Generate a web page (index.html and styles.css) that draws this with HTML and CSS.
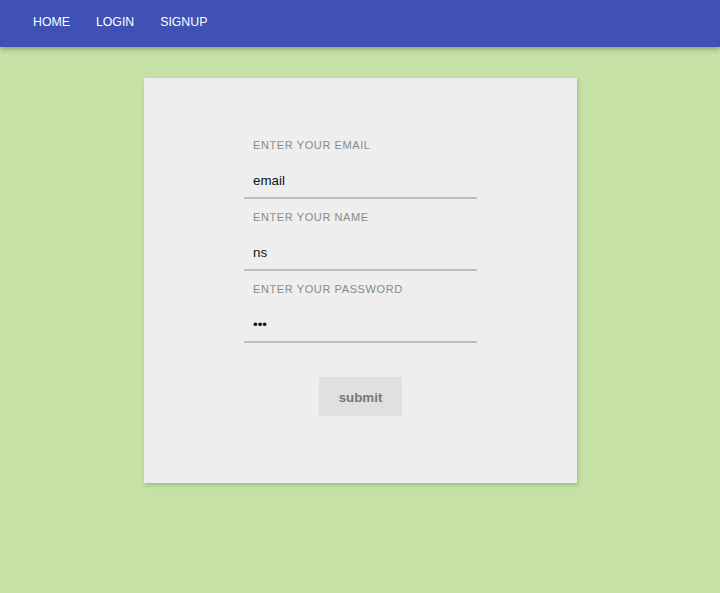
FILE: index.html
```html
<!DOCTYPE html>
<html>
<head>
<meta charset="utf-8">
<link rel="stylesheet" href="styles.css">
</head>
<body>
<nav class="topbar">
  <a class="nav-link" href="#">HOME</a>
  <a class="nav-link" href="#">LOGIN</a>
  <a class="nav-link" href="#">SIGNUP</a>
</nav>
<main class="page">
  <form class="card">
    <div class="fields">
      <label class="field">
        <span class="field-label">ENTER YOUR EMAIL</span>
        <input class="field-input" type="text" value="email">
      </label>
      <label class="field">
        <span class="field-label">ENTER YOUR NAME</span>
        <input class="field-input" type="text" value="ns">
      </label>
      <label class="field">
        <span class="field-label">ENTER YOUR PASSWORD</span>
        <input class="field-input" type="password" value="abc">
      </label>
    </div>
    <button class="submit-btn" type="button">submit</button>
  </form>
</main>
</body>
</html>
```
FILE: styles.css
```css
* { box-sizing: border-box; }
html, body { margin: 0; padding: 0; }
body {
  background: #c5e1a5;
  font-family: "Liberation Sans", Arial, sans-serif;
  min-height: 593px;
}
.topbar {
  height: 47px;
  background: #3f51b5;
  display: flex;
  align-items: center;
  padding-left: 33px;
  gap: 26px;
  box-shadow: 0 2px 5px rgba(0, 0, 0, 0.3);
  position: relative;
  z-index: 1;
}
.nav-link {
  color: #ffffff;
  text-decoration: none;
  font-size: 12.3px;
  line-height: 16px;
  margin-top: -4px;
}
.page {
  display: flex;
  justify-content: center;
  padding-top: 31px;
}
.card {
  width: 433px;
  height: 405px;
  background: #eeeeee;
  box-shadow: 1px 2px 4px rgba(0, 0, 0, 0.18);
  padding-top: 60px;
  display: flex;
  flex-direction: column;
  align-items: center;
  margin-left: 1px;
}
.fields {
  width: 233px;
  display: flex;
  flex-direction: column;
  gap: 11px;
}
.field {
  display: flex;
  flex-direction: column;
}
.field-label {
  font-size: 11px;
  line-height: 14px;
  letter-spacing: 0.6px;
  color: #8a8a8a;
  padding-left: 9px;
}
.field-input {
  height: 47px;
  border: none;
  border-bottom: 2px solid #bdbdbd;
  background: transparent;
  padding: 19px 9px 7px;
  font-family: "Liberation Sans", Arial, sans-serif;
  font-size: 13.33px;
  line-height: 19px;
  color: #111;
  outline: none;
}
.submit-btn {
  margin-top: 34px;
  width: 83px;
  height: 39px;
  border: none;
  background: #e0e0e0;
  color: #777777;
  font-family: "Liberation Sans", Arial, sans-serif;
  font-size: 13.33px;
  font-weight: bold;
  padding: 0;
  padding-top: 2px;
}
```
